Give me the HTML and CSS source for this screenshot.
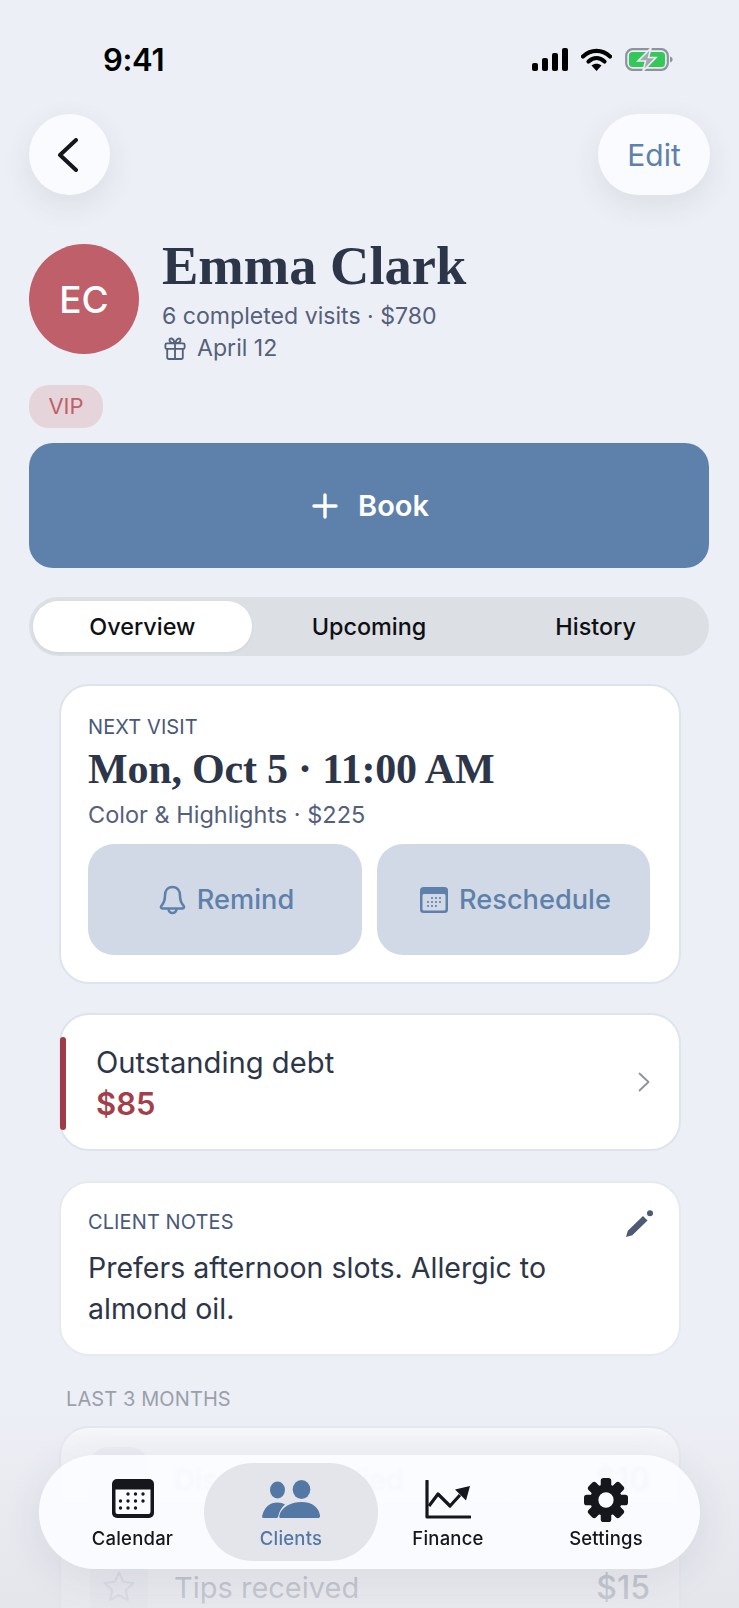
FILE: index.html
```html
<!DOCTYPE html>
<html lang="en">
<head>
<meta charset="utf-8">
<title>Emma Clark</title>
<link rel="stylesheet" href="styles.css">
</head>
<body>
<div class="screen">
  <div class="status">
    <span class="time">9:41</span>
    <div class="status-icons">
      <svg class="ic-signal" viewBox="0 0 36 23"><rect x="0" y="15" width="6" height="8" rx="2"/><rect x="10" y="10" width="6" height="13" rx="2"/><rect x="20" y="5" width="6" height="18" rx="2"/><rect x="30" y="0" width="6" height="23" rx="2"/></svg>
      <svg class="ic-wifi" viewBox="0 0 31 23"><path d="M2 8.5C10 1 21 1 29 8.5" fill="none" stroke="#000" stroke-width="4.2" stroke-linecap="round"/><path d="M7.5 13.5C12.5 9 18.5 9 23.5 13.5" fill="none" stroke="#000" stroke-width="4.2" stroke-linecap="round"/><path d="M15.5 23L10.5 17.5C13.5 15 17.5 15 20.5 17.5Z"/></svg>
      <svg class="ic-battery" viewBox="0 0 48 23"><rect x="1.2" y="1.2" width="41.6" height="20.6" rx="6.5" fill="none" stroke="#8e929a" stroke-width="2.2"/><rect x="4" y="4" width="36" height="15" rx="3.5" fill="#34c759"/><path d="M45 8.5c1.8.6 2.6 1.6 2.6 3s-.8 2.4-2.6 3z" fill="#8e929a"/><path d="M26 0L13 13h7.5L18 23l13-13.5h-7.5z" fill="#a5a9b2" stroke="#eceff5" stroke-width="1.6"/></svg>
    </div>
  </div>

  <div class="nav">
    <button class="round back" aria-label="Back"><svg viewBox="0 0 21 34"><path d="M19 2L3 17l16 15" fill="none" stroke="#15171c" stroke-width="4" stroke-linecap="round" stroke-linejoin="round"/></svg></button>
    <button class="round edit">Edit</button>
  </div>

  <header class="profile">
    <div class="avatar">EC</div>
    <div class="who">
      <h1 class="name">Emma Clark</h1>
      <p class="stat">6 completed visits · $780</p>
      <p class="stat bday"><svg viewBox="0 0 24 26"><g fill="none" stroke="#55607a" stroke-width="2" stroke-linejoin="round" stroke-linecap="round"><rect x="1.5" y="8" width="21" height="6" rx="1.5"/><path d="M3.5 14v9a2 2 0 002 2h13a2 2 0 002-2v-9M12 8v17M12 8C8 8 6 6.600 6 4.300S9.800.9 12 8c2.200-7.100 6-5.800 6-3.700S16 8 12 8z"/></g></svg>April 12</p>
    </div>
  </header>

  <span class="chip">VIP</span>

  <button class="book"><svg viewBox="0 0 26 26"><path d="M13 2v22M2 13h22" stroke="#fff" stroke-width="3.4" stroke-linecap="round"/></svg>Book</button>

  <div class="segment">
    <div class="seg on">Overview</div>
    <div class="seg">Upcoming</div>
    <div class="seg">History</div>
  </div>

  <section class="card visit">
    <div class="label">NEXT VISIT</div>
    <div class="when">Mon, Oct 5 · 11:00 AM</div>
    <div class="what">Color &amp; Highlights · $225</div>
    <div class="actions">
      <button class="act"><svg class="bell" viewBox="0 0 27 30"><path d="M13.500 2C8.500 2 6 6 6 10.500c0 5.500-1.500 8-3.600 10.300-.9 1-.3 2.700 1.100 2.700h20c1.400 0 2-1.700 1.100-2.700C22.500 18.500 21 16 21 10.500 21 6 18.500 2 13.500 2zM9.500 23.500c0 2.800 1.800 4.500 4 4.500s4-1.700 4-4.500" fill="none" stroke="#5e81ab" stroke-width="2.600" stroke-linejoin="round"/></svg>Remind</button>
      <button class="act"><svg class="mini-cal" viewBox="0 0 28 26"><rect width="28" height="26" rx="3.500" fill="#5e81ab"/><rect x="2.500" y="7" width="23" height="16.500" rx="1.500" fill="#d2d9e6"/><g fill="#5e81ab"><circle cx="12" cy="11" r="1.100"/><circle cx="16" cy="11" r="1.100"/><circle cx="20" cy="11" r="1.100"/><circle cx="8" cy="15" r="1.100"/><circle cx="12" cy="15" r="1.100"/><circle cx="16" cy="15" r="1.100"/><circle cx="20" cy="15" r="1.100"/><circle cx="8" cy="19" r="1.100"/><circle cx="12" cy="19" r="1.100"/><circle cx="16" cy="19" r="1.100"/></g></svg>Reschedule</button>
    </div>
  </section>

  <section class="card debt">
    <span class="bar"></span>
    <div class="debt-text">
      <div class="debt-title">Outstanding debt</div>
      <div class="debt-amt">$85</div>
    </div>
    <svg class="chev" viewBox="0 0 12 20"><path d="M1.500 1.500L10.500 10l-9 8.500" fill="none" stroke="#8b92a2" stroke-width="1.800" stroke-linecap="round" stroke-linejoin="round"/></svg>
  </section>

  <section class="card notes">
    <div class="notes-head">
      <div class="label">CLIENT NOTES</div>
      <svg class="pencil" viewBox="0 0 27 27"><path fill="#4d5a73" d="M0 27l1.800-6.300L17 6l4.500 4.500L6.300 25.200z"/><circle cx="24" cy="3.200" r="3" fill="#4d5a73"/></svg>
    </div>
    <p class="notes-text">Prefers afternoon slots. Allergic to almond oil.</p>
  </section>

  <div class="section-label">LAST 3 MONTHS</div>

  <section class="card stats">
    <div class="row">
      <span class="tile"><svg viewBox="0 0 24 30"><rect x="2" y="2" width="20" height="26" rx="3" fill="none" stroke="#b8bdc9" stroke-width="2"/></svg></span>
      <span class="row-name">Discount applied</span>
      <span class="row-val">$10</span>
    </div>
    <div class="row">
      <span class="tile"><svg viewBox="0 0 34 34"><path d="M17 2.500l4.300 9.300 10.200 1.200-7.600 7 2 10.100L17 25l-8.900 5.100 2-10.100-7.600-7 10.200-1.200z" fill="none" stroke="#a9afbd" stroke-width="2" stroke-linejoin="round"/></svg></span>
      <span class="row-name">Tips received</span>
      <span class="row-val">$15</span>
    </div>
  </section>

  <div class="fade"></div>

  <nav class="tabbar">
    <div class="tab t1">
      <svg class="t-cal" viewBox="0 0 42 39"><rect width="42" height="39" rx="5" fill="#15171c"/><path d="M3.500 10.500h35V33a2 2 0 01-2 2h-31a2 2 0 01-2-2z" fill="#fbfcff"/><g fill="#15171c"><circle cx="16" cy="15" r="1.700"/><circle cx="23.500" cy="15" r="1.700"/><circle cx="31" cy="15" r="1.700"/><circle cx="8.500" cy="22" r="1.700"/><circle cx="16" cy="22" r="1.700"/><circle cx="23.500" cy="22" r="1.700"/><circle cx="31" cy="22" r="1.700"/><circle cx="8.500" cy="29" r="1.700"/><circle cx="16" cy="29" r="1.700"/><circle cx="23.500" cy="29" r="1.700"/></g></svg>
      <span>Calendar</span>
    </div>
    <div class="tab active">
      <svg class="t-clients" viewBox="0 0 58 38"><g fill="#5478a6"><ellipse cx="15.500" cy="10" rx="7.500" ry="8.500"/><ellipse cx="39.500" cy="9.500" rx="8.800" ry="9.500"/><path d="M1 38c-1 0-1-1.500-.6-3C2.500 27 8 22.500 15.500 22.500c3 0 5.500.7 7.500 2-3.500 3-5.800 7-6.700 11.500-.3 1.500-1 2-2 2z"/><path d="M19 38c-1.500 0-2-1-1.600-2.500C19.500 27.500 28 22 39.500 22S57 28 58 35.500c.2 1.500-.4 2.500-2 2.500z"/></g></svg>
      <span>Clients</span>
    </div>
    <div class="tab t3">
      <svg class="t-fin" viewBox="0 0 46 39"><path d="M2 1v36h43" fill="none" stroke="#15171c" stroke-width="3.200" stroke-linecap="round" stroke-linejoin="round"/><path d="M4 26l9-12 12 12 10-11" fill="none" stroke="#15171c" stroke-width="3.200" stroke-linejoin="round"/><path d="M45 6l-15 3.500 11 11z" fill="#15171c"/></svg>
      <span>Finance</span>
    </div>
    <div class="tab t4">
      <svg class="t-gear" viewBox="-23 -23 46 46"><g fill="#15171c"><circle r="16.500"/><rect x="-5.500" y="-23" width="11" height="46" rx="3"/><rect x="-5.500" y="-23" width="11" height="46" rx="3" transform="rotate(45)"/><rect x="-5.500" y="-23" width="11" height="46" rx="3" transform="rotate(90)"/><rect x="-5.500" y="-23" width="11" height="46" rx="3" transform="rotate(135)"/></g><circle r="8" fill="#fbfcff"/></svg>
      <span>Settings</span>
    </div>
  </nav>
</div>
</body>
</html>
```
FILE: styles.css
```css
* { box-sizing: border-box; }
html, body { margin: 0; padding: 0; }
body { background: #eceff5; font-family: Inter, "Noto Sans", sans-serif; color: #2d3648; }
button { font-family: inherit; border: 0; padding: 0; }
p, h1 { margin: 0; }

.screen { position: relative; width: 739px; height: 1608px; overflow: hidden; padding: 0 29px; background: #eceff5; }

.status { height: 114px; display: flex; justify-content: space-between; padding: 45px 0 0 74px; align-items: flex-start; }
.time { font-size: 31px; font-weight: 600; line-height: 30px; color: #000; letter-spacing: -0.3px; }
.status-icons { display: flex; align-items: center; gap: 13px; margin: 3px 37px 0 0; }
.status-icons svg { display: block; height: 23px; }
.ic-signal { width: 36px; }
.ic-wifi { width: 31px; }
.ic-battery { width: 48px; }

.nav { display: flex; justify-content: space-between; }
.round { height: 81px; border-radius: 40.500px; background: #fafbff; box-shadow: 0 10px 30px rgba(50, 60, 80, 0.09); display: flex; align-items: center; justify-content: center; }
.back { width: 81px; }
.back svg { width: 21px; height: 34px; margin-right: 4px; }
.edit { width: 112px; font-size: 30px; color: #5e81ab; }

.profile { display: flex; gap: 23px; margin-top: 49px; height: 110px; }
.avatar { width: 110px; height: 110px; border-radius: 50%; background: #bf5f69; color: #fff; font-size: 37px; font-weight: 500; display: flex; align-items: center; justify-content: center; }
.name { font-family: "Liberation Serif", serif; font-weight: 700; font-size: 54.500px; line-height: 50px; color: #2d3648; margin-top: -3px; }
.stat { font-size: 23.100px; line-height: 32px; color: #55607a; }
.who .stat:first-of-type { margin-top: 9px; }
.bday { display: flex; align-items: center; gap: 11px; padding-left: 2px; }
.bday svg { width: 22px; height: 24px; }

.chip { display: block; width: 74px; height: 43px; margin-top: 31px; border-radius: 20px; background: #e5d5da; color: #bf5f69; font-size: 22px; line-height: 43px; text-align: center; }

.book { display: flex; align-items: center; justify-content: center; gap: 20px; width: 680px; height: 125px; margin-top: 15px; padding-left: 3px; border-radius: 24px; background: #5e81ab; color: #fff; font-size: 29px; font-weight: 600; }
.book svg { width: 26px; height: 26px; }

.segment { display: grid; grid-template-columns: repeat(3, 1fr); width: 680px; height: 59px; margin-top: 29px; border-radius: 29.500px; background: #dcdfe4; }
.seg { display: flex; align-items: center; justify-content: center; margin: 4px; font-size: 23.400px; font-weight: 450; color: #0e1014; border-radius: 25px; }
.seg.on { background: #fff; box-shadow: 0 1px 3px rgba(40, 50, 70, 0.06); }

.card { width: 622px; margin: 29px 0 0 30px; background: #fff; border: 2px solid #dee3ed; border-radius: 30px; }
.label { font-size: 20px; line-height: 24px; color: #49597a; letter-spacing: 0.1px; }

.visit { height: 300px; margin-top: 28px; padding: 29px 27px 0; }
.when { font-family: "Liberation Serif", serif; font-weight: 700; font-size: 42px; line-height: 48px; letter-spacing: -0.2px; margin-top: 6px; color: #2d3648; }
.what { font-size: 23.500px; line-height: 28px; color: #55607a; margin-top: 8px; }
.actions { display: grid; grid-template-columns: 274px 273px; gap: 15px; margin-top: 15px; }
.act { height: 111px; padding-left: 3px; border-radius: 26px; background: #d2d9e6; color: #5e81ab; font-size: 27.200px; font-weight: 500; display: flex; align-items: center; justify-content: center; gap: 11px; }
.act + .act { padding-left: 4px; }
.bell { width: 27px; height: 30px; }
.mini-cal { width: 28px; height: 26px; }

.debt { position: relative; height: 138px; display: flex; align-items: center; padding: 0 29px 0 35px; justify-content: space-between; }
.bar { position: absolute; left: -1px; top: 22px; width: 6px; height: 93px; border-radius: 3px; background: #9d3c46; }
.debt-text { margin-top: 6px; }
.debt-title { font-size: 29.200px; line-height: 36px; color: #2d3648; margin-top: -3px; }
.debt-amt { font-size: 31px; line-height: 36px; font-weight: 600; color: #a33f4b; margin-top: 5px; }
.chev { width: 12px; height: 20px; }

.notes { height: 175px; margin-top: 30px; padding: 27px 26px 0 27px; border-color: #e6e9f0; }
.notes-head { display: flex; justify-content: space-between; align-items: flex-start; }
.pencil { width: 27px; height: 27px; }
.notes-text { font-size: 28.500px; line-height: 41px; color: #2d3648; margin-top: 10px; max-width: 520px; }

.section-label { font-size: 20px; line-height: 24px; color: #9a9fab; margin: 31px 0 0 37px; letter-spacing: 0.1px; }

.stats { height: 240px; margin-top: 15px; padding: 19px 29px; }
.row { display: flex; align-items: center; height: 64px; margin-bottom: 44px; }
.tile { width: 58px; height: 64px; border-radius: 18px; background: #eceef3; display: flex; align-items: center; justify-content: center; }
.tile svg { width: 34px; height: 34px; }
.row-name { font-size: 29px; color: #2d3648; margin-left: 26px; flex: 1; }
.row-val { font-size: 32px; font-weight: 500; color: #2d3648; }

.fade { position: absolute; left: 0; right: 0; bottom: 0; height: 205px; background: linear-gradient(to bottom, rgba(236, 239, 245, 0) 0%, rgba(234, 236, 242, 0.6) 18%, rgba(226, 228, 234, 0.85) 100%); }

.tabbar { position: absolute; left: 39px; top: 1455px; width: 661px; height: 114px; border-radius: 57px; background: rgba(251, 252, 255, 0.94); backdrop-filter: blur(1.500px); box-shadow: 0 8px 40px rgba(50, 60, 80, 0.09); display: grid; grid-template-columns: 165px 174px 159px 163px; }
.tab { display: flex; flex-direction: column; align-items: center; padding-top: 22px; font-size: 18.500px; font-weight: 500; color: #15171c; }
.t1 { padding-left: 22px; }
.t3 { padding-right: 19px; }
.t4 { padding-right: 25px; }
.tab svg { display: block; flex: none; }
.tab span { line-height: 24px; letter-spacing: 0.2px; }
.tab.active { height: 98px; margin-top: 8px; padding-top: 14px; border-radius: 49px; background: rgba(221, 223, 229, 0.8); color: #5478a6; }
.t-cal { width: 42px; height: 39px; margin: 2px 0 8px; }
.t-clients { width: 58px; height: 38px; margin: 3px 0 8px; }
.t-fin { width: 46px; height: 39px; margin: 3px 0 7px; }
.t-gear { width: 44px; height: 44px; margin: 1px 0 4px; }
```
